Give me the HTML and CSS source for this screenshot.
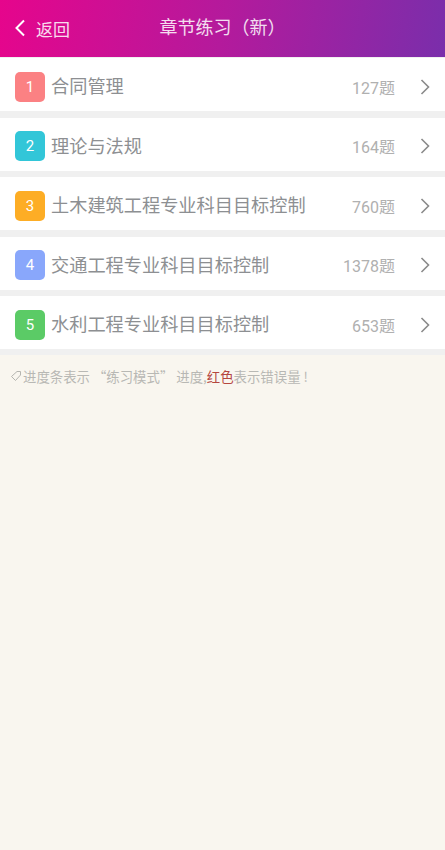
FILE: index.html
```html
<!DOCTYPE html>
<html lang="zh">
<head>
<meta charset="utf-8">
<title>章节练习（新）</title>
<link rel="stylesheet" href="styles.css">
</head>
<body>
<header class="bar">
  <a class="back">
    <svg class="back-icon" viewBox="0 0 12 18" width="12" height="18"><path d="M10 1.5 2.5 9l7.5 7.5" fill="none" stroke="#fff" stroke-width="2"/></svg>
    <span>返回</span>
  </a>
  <h1 class="title">章节练习（新）</h1>
</header>
<main class="list">
  <div class="row"><span class="num c1">1</span><span class="name">合同管理</span><span class="count">127题</span><svg class="chev" viewBox="0 0 10 16" width="10" height="16"><path d="M1.5 1 8.5 8l-7 7" fill="none" stroke="#8a8a8a" stroke-width="1.6"/></svg></div>
  <div class="row"><span class="num c2">2</span><span class="name">理论与法规</span><span class="count">164题</span><svg class="chev" viewBox="0 0 10 16" width="10" height="16"><path d="M1.5 1 8.5 8l-7 7" fill="none" stroke="#8a8a8a" stroke-width="1.6"/></svg></div>
  <div class="row"><span class="num c3">3</span><span class="name">土木建筑工程专业科目目标控制</span><span class="count">760题</span><svg class="chev" viewBox="0 0 10 16" width="10" height="16"><path d="M1.5 1 8.5 8l-7 7" fill="none" stroke="#8a8a8a" stroke-width="1.6"/></svg></div>
  <div class="row"><span class="num c4">4</span><span class="name">交通工程专业科目目标控制</span><span class="count">1378题</span><svg class="chev" viewBox="0 0 10 16" width="10" height="16"><path d="M1.5 1 8.5 8l-7 7" fill="none" stroke="#8a8a8a" stroke-width="1.6"/></svg></div>
  <div class="row"><span class="num c5">5</span><span class="name">水利工程专业科目目标控制</span><span class="count">653题</span><svg class="chev" viewBox="0 0 10 16" width="10" height="16"><path d="M1.5 1 8.5 8l-7 7" fill="none" stroke="#8a8a8a" stroke-width="1.6"/></svg></div>
</main>
<p class="note">
  <svg class="tag" viewBox="0 0 12 12" width="12" height="12"><path d="M7 1.5h3.5V5L5.5 10.5 1.5 6.5z" fill="none" stroke="#b5b5b0" stroke-width="1"/></svg><span>进度条表示 “练习模式” 进度,<em class="red">红色</em>表示错误量 !</span>
</p>
</body>
</html>
```
FILE: styles.css
```css
* { box-sizing: border-box; }
html, body { height: 100%; }
body {
  margin: 0;
  background: #f9f6ef;
  font-family: "Noto Sans CJK SC", "Noto Sans", sans-serif;
  overflow: hidden;
}
.bar {
  height: 57px;
  display: flex;
  align-items: center;
  justify-content: center;
  position: relative;
  background: linear-gradient(100deg, #e6058c 0%, #b41a9c 50%, #7a2eab 100%);
  color: #fff;
  padding-bottom: 3px;
}
.back {
  position: absolute;
  left: 14px;
  top: 15px;
  display: flex;
  align-items: center;
  gap: 10px;
  font-size: 17px;
  line-height: 22px;
}
.back span { opacity: .85; margin-top: 3px; }
.title {
  margin: 0 0 3px 0;
  font-size: 18px;
  font-weight: 400;
  opacity: .85;
}
.list {
  display: flex;
  flex-direction: column;
  gap: 6.5px;
  padding-top: 1px;
  background: #f0f0f0;
  padding-bottom: 6px;
}
.row {
  height: 53px;
  background: #fff;
  display: flex;
  align-items: center;
  padding: 4px 15px 0;
}
.num {
  width: 30px;
  height: 30px;
  border-radius: 5px;
  color: #fff;
  opacity: .85;
  font-size: 15px;
  display: flex;
  align-items: center;
  justify-content: center;
  flex: none;
  font-family: "Roboto", sans-serif;
}
.c1 { background: #fb6c6e; }
.c2 { background: #0fbdd2; }
.c3 { background: #fd9f00; }
.c4 { background: #7598fb; }
.c5 { background: #3fc24c; }
.name {
  margin: -3px 0 0 6px;
  flex: 1;
  font-size: 18.2px;
  color: #8d8f92;
}
.count {
  font-size: 16px;
  color: #b0b0b0;
  font-family: "Roboto", "Noto Sans CJK SC", sans-serif;
}
.chev { margin-left: 25px; flex: none; }
.note {
  margin: 0;
  padding: 12px 10px;
  display: flex;
  align-items: center;
  gap: 1px;
  font-size: 13.4px;
  line-height: 18px;
  color: #b8b8b4;
  white-space: nowrap;
}
.red { color: #b5473f; font-style: normal; }
```
